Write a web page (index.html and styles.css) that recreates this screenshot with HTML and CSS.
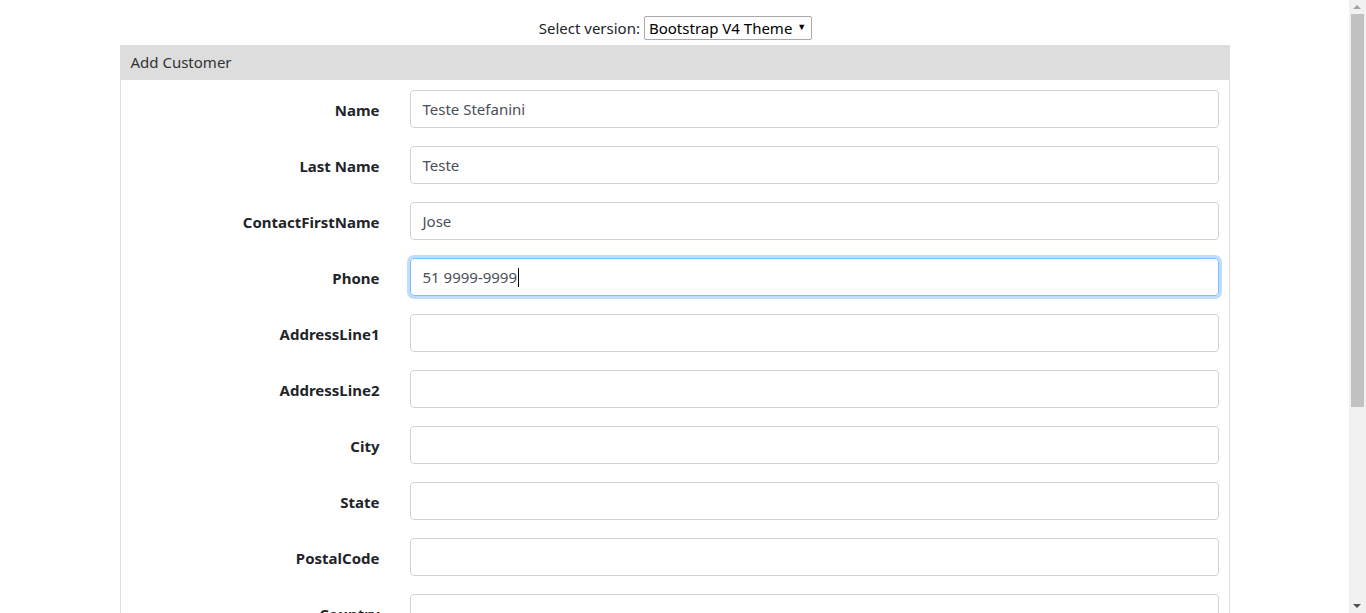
FILE: index.html
```html
<!DOCTYPE html>
<html>
<head>
<meta charset="utf-8">
<link rel="stylesheet" href="styles.css">
</head>
<body>
<div class="page">
  <div class="version">
    <span class="version-label">Select version:</span>
    <div class="select"><span>Bootstrap V4 Theme</span><span class="caret">▼</span></div>
  </div>
  <div class="container">
    <div class="card">
      <div class="card-header">Add Customer</div>
      <div class="card-body">
        <div class="row"><label class="label">Name</label><div class="field"><div class="input">Teste Stefanini</div></div></div>
        <div class="row"><label class="label">Last Name</label><div class="field"><div class="input">Teste</div></div></div>
        <div class="row"><label class="label">ContactFirstName</label><div class="field"><div class="input">Jose</div></div></div>
        <div class="row"><label class="label">Phone</label><div class="field"><div class="input focus">51 9999-9999<span class="cursor"></span></div></div></div>
        <div class="row"><label class="label">AddressLine1</label><div class="field"><div class="input"></div></div></div>
        <div class="row"><label class="label">AddressLine2</label><div class="field"><div class="input"></div></div></div>
        <div class="row"><label class="label">City</label><div class="field"><div class="input"></div></div></div>
        <div class="row"><label class="label">State</label><div class="field"><div class="input"></div></div></div>
        <div class="row"><label class="label">PostalCode</label><div class="field"><div class="input"></div></div></div>
        <div class="row"><label class="label">Country</label><div class="field"><div class="input"></div></div></div>
        <div class="row"><label class="label">SalesRep</label><div class="field"><div class="input"></div></div></div>
      </div>
    </div>
  </div>
</div>
<div class="scrollbar">
  <div class="arrow up"></div>
  <div class="thumb"></div>
  <div class="arrow down"></div>
</div>
</body>
</html>
```
FILE: styles.css
```css
html, body {
  margin: 0;
  padding: 0;
  height: 613px;
  overflow: hidden;
  background: #fff;
}
body {
  font-family: "Noto Sans", "Open Sans", sans-serif;
  font-size: 15px;
  color: #212529;
}
.page {
  width: 1349px;
}
.version {
  display: flex;
  justify-content: center;
  align-items: center;
  gap: 4px;
  padding-top: 16px;
  height: 24px;
  padding-left: 2px;
}
.version-label {
  color: #212529;
}
.select {
  display: flex;
  align-items: center;
  height: 22px;
  border: 1px solid #a9a9a9;
  border-radius: 2px;
  padding: 0 5px 0 4px;
  gap: 5px;
  color: #000;
}
.caret {
  font-size: 9px;
  line-height: 1;
  margin-top: -4px;
}
.container {
  width: 1110px;
  margin: 5px auto 0;
}
.card {
  border: 1px solid #dfdfdf;
  border-top: none;
}
.card-header {
  background: #dddddd;
  height: 35px;
  line-height: 35px;
  padding: 0 10px 0 11px;
  color: #333;
  margin: 0 -1px;
}
.card-body {
  padding: 10px;
  display: flex;
  flex-direction: column;
  gap: 18px;
}
.row {
  display: grid;
  grid-template-columns: 249px 1fr;
  column-gap: 30px;
  align-items: center;
}
.label {
  text-align: right;
  font-weight: 700;
  color: #212529;
  padding-top: 2px;
}
.input {
  height: 36px;
  border: 1px solid #ced4da;
  border-radius: 4px;
  padding: 0 12px;
  display: flex;
  align-items: center;
  color: #495057;
  font-size: 15px;
}
.input.focus {
  border-color: #80bdff;
  box-shadow: 0 0 0 3px rgba(0, 123, 255, 0.25);
}
.cursor {
  display: inline-block;
  width: 1px;
  height: 19px;
  background: #000;
  margin-left: 1px;
}
.scrollbar {
  position: fixed;
  top: 0;
  right: 0;
  width: 17px;
  height: 613px;
  background: #f1f1f1;
}
.thumb {
  position: absolute;
  left: 2px;
  top: 14px;
  width: 13px;
  height: 393px;
  background: #c1c1c1;
}
.arrow {
  position: absolute;
  left: 4px;
  width: 0;
  height: 0;
  border-left: 4px solid transparent;
  border-right: 4px solid transparent;
}
.arrow.up {
  top: 5px;
  border-bottom: 4px solid #a3a3a3;
}
.arrow.down {
  bottom: 5px;
  border-top: 4px solid #505050;
}
```
